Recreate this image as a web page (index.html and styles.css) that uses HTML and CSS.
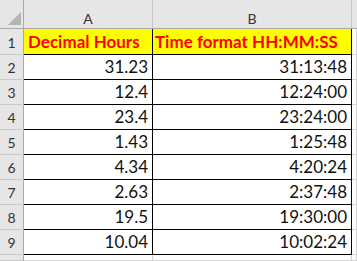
FILE: index.html
```html
<!DOCTYPE html>
<html>
<head>
<meta charset="utf-8">
<link rel="stylesheet" href="styles.css">
</head>
<body>
<div class="sheet">
  <div class="corner"><span class="tri"></span></div>
  <div class="colhead">A</div>
  <div class="colhead">B</div>
  <div class="colhead last"></div>

  <div class="rowhead">1</div>
  <div class="cell title">Decimal Hours</div>
  <div class="cell title">Time format HH:MM:SS</div>
  <div class="grid"></div>

  <div class="rowhead">2</div>
  <div class="cell num">31.23</div>
  <div class="cell num">31:13:48</div>
  <div class="grid"></div>

  <div class="rowhead">3</div>
  <div class="cell num">12.4</div>
  <div class="cell num">12:24:00</div>
  <div class="grid"></div>

  <div class="rowhead">4</div>
  <div class="cell num">23.4</div>
  <div class="cell num">23:24:00</div>
  <div class="grid"></div>

  <div class="rowhead">5</div>
  <div class="cell num">1.43</div>
  <div class="cell num">1:25:48</div>
  <div class="grid"></div>

  <div class="rowhead">6</div>
  <div class="cell num">4.34</div>
  <div class="cell num">4:20:24</div>
  <div class="grid"></div>

  <div class="rowhead">7</div>
  <div class="cell num">2.63</div>
  <div class="cell num">2:37:48</div>
  <div class="grid"></div>

  <div class="rowhead">8</div>
  <div class="cell num">19.5</div>
  <div class="cell num">19:30:00</div>
  <div class="grid"></div>

  <div class="rowhead">9</div>
  <div class="cell num">10.04</div>
  <div class="cell num">10:02:24</div>
  <div class="grid"></div>

  <div class="rowhead"></div>
  <div class="grid"></div>
  <div class="grid"></div>
  <div class="grid"></div>
</div>
</body>
</html>
```

FILE: styles.css
```css
html, body {
  margin: 0;
  padding: 0;
  background: #ffffff;
}

.sheet {
  width: 357px;
  height: 261px;
  overflow: hidden;
  display: grid;
  grid-template-columns: 24px 129px 199px 1fr;
  grid-template-rows: 29px 26px repeat(8, 25px) 1fr;
  font-family: Lato, "Liberation Sans", sans-serif;
}

.sheet > div {
  box-sizing: border-box;
  overflow: visible;
  white-space: nowrap;
}

.corner {
  background: #e6e6e6;
  border-right: 1px solid #a9a9a9;
  border-bottom: 1px solid #a9a9a9;
  position: relative;
}

.tri {
  position: absolute;
  right: 2px;
  bottom: 3px;
  width: 0;
  height: 0;
  border-left: 13px solid transparent;
  border-bottom: 13px solid #b4b4b4;
}

.colhead {
  background: #e6e6e6;
  border-right: 1px solid #c6c6c6;
  border-bottom: 1px solid #a9a9a9;
  display: flex;
  align-items: flex-end;
  justify-content: center;
  padding-bottom: 1px;
  font-size: 14px;
  color: #333333;
}

.colhead.last {
  border-right: none;
}

.rowhead {
  background: #e6e6e6;
  border-right: 1px solid #a9a9a9;
  border-bottom: 1px solid #c9c9c9;
  display: flex;
  align-items: flex-end;
  justify-content: center;
  padding-bottom: 3px;
  font-size: 14px;
  color: #333333;
}

.cell {
  border-right: 1px solid #000000;
  border-bottom: 1px solid #000000;
  display: flex;
  align-items: flex-end;
  padding-bottom: 2px;
  font-size: 17px;
  color: #111111;
}

.title {
  background: #ffff00;
  color: #ff0000;
  font-weight: bold;
  padding-left: 4px;
  justify-content: flex-start;
}

.title + .title {
  padding-left: 2px;
}

.num {
  justify-content: flex-end;
  padding-right: 4px;
}

.grid {
  border-right: 1px solid #d4d4d4;
  border-bottom: 1px solid #d4d4d4;
}
```
